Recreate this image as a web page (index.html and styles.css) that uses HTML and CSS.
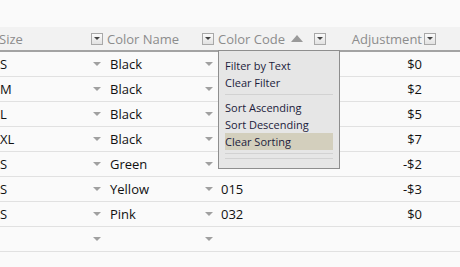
FILE: index.html
```html
<!DOCTYPE html>
<html lang="en">
<head>
<meta charset="UTF-8">
<title>Product Options Grid</title>
<link rel="stylesheet" href="styles.css">
</head>
<body>
<div class="grid">
    <div class="head-row">
        <div class="hcell"><span class="htext size-text">Size</span><span class="hbtn"></span></div>
        <div class="hcell"><span class="htext">Color Name</span><span class="hbtn"></span></div>
        <div class="hcell"><span class="htext">Color Code<span class="sort-up"></span></span><span class="hbtn"></span></div>
        <div class="hcell right"><span class="htext">Adjustment</span><span class="hbtn"></span></div>
    </div>

    <div class="row">
        <div class="cell pick first">S<span class="arrow"></span></div>
        <div class="cell pick">Black<span class="arrow"></span></div>
        <div class="cell"></div>
        <div class="cell money">$0</div>
    </div>
    <div class="row">
        <div class="cell pick first">M<span class="arrow"></span></div>
        <div class="cell pick">Black<span class="arrow"></span></div>
        <div class="cell"></div>
        <div class="cell money">$2</div>
    </div>
    <div class="row">
        <div class="cell pick first">L<span class="arrow"></span></div>
        <div class="cell pick">Black<span class="arrow"></span></div>
        <div class="cell"></div>
        <div class="cell money">$5</div>
    </div>
    <div class="row">
        <div class="cell pick first">XL<span class="arrow"></span></div>
        <div class="cell pick">Black<span class="arrow"></span></div>
        <div class="cell"></div>
        <div class="cell money">$7</div>
    </div>
    <div class="row">
        <div class="cell pick first">S<span class="arrow"></span></div>
        <div class="cell pick">Green<span class="arrow"></span></div>
        <div class="cell"></div>
        <div class="cell money">-$2</div>
    </div>
    <div class="row">
        <div class="cell pick first">S<span class="arrow"></span></div>
        <div class="cell pick">Yellow<span class="arrow"></span></div>
        <div class="cell">015</div>
        <div class="cell money">-$3</div>
    </div>
    <div class="row">
        <div class="cell pick first">S<span class="arrow"></span></div>
        <div class="cell pick">Pink<span class="arrow"></span></div>
        <div class="cell">032</div>
        <div class="cell money">$0</div>
    </div>
    <div class="row">
        <div class="cell pick first"><span></span><span class="arrow"></span></div>
        <div class="cell pick"><span></span><span class="arrow"></span></div>
        <div class="cell"></div>
        <div class="cell money"></div>
    </div>

    <!-- column menu for Color Code -->
    <div class="col-menu">
        <div class="menu-item">Filter by Text</div>
        <div class="menu-item">Clear Filter</div>
        <div class="menu-sep"></div>
        <div class="menu-item">Sort Ascending</div>
        <div class="menu-item">Sort Descending</div>
        <div class="menu-item active">Clear Sorting</div>
        <div class="menu-sep"></div>
        <div class="menu-sep last"></div>
    </div>
</div>
</body>
</html>
```

FILE: styles.css
```css
body, html {
    margin: 0;
    height: 100%;
    background: #fafafa;
    font-family: "Open Sans", sans-serif;
    overflow: hidden;
}
.grid {
    position: relative;
    padding-top: 27px;
}
.head-row, .row {
    display: grid;
    grid-template-columns: 105px 111px 112px 132px;
}
.head-row {
    height: 23px;
    background: #f2f2f2;
    border-bottom: 2px solid #a3a3a3;
}
.hcell {
    display: flex;
    align-items: center;
    justify-content: space-between;
    padding: 0 2px;
    color: #8c8c8c;
    font-size: 13px;
}
.hcell.right {
    justify-content: flex-end;
    padding-right: 24px;
    gap: 2px;
}
.htext {
    display: flex;
    align-items: center;
}
.size-text {
    margin-left: -3px;
}
.hbtn {
    width: 10px;
    height: 10px;
    border: 1px solid #a8a8a8;
    background: linear-gradient(#fbfbfb, #e2e2e2);
    display: flex;
    align-items: center;
    justify-content: center;
}
.hbtn::after {
    content: "";
    border-left: 3px solid transparent;
    border-right: 3px solid transparent;
    border-top: 3px solid #444;
}
.sort-up {
    margin-left: 6px;
    border-left: 6px solid transparent;
    border-right: 6px solid transparent;
    border-bottom: 7px solid #9a9a9a;
}
.row {
    height: 24px;
    border-bottom: 1px solid #e1e1e1;
    font-size: 13px;
    color: #111;
}
.cell {
    display: flex;
    align-items: center;
    padding-left: 5px;
}
.cell.pick {
    justify-content: space-between;
    padding-right: 3px;
}
.cell.first {
    padding-left: 0;
    padding-right: 4px;
}
.cell.money {
    justify-content: flex-end;
    padding-right: 38px;
}
.arrow {
    border-left: 4px solid transparent;
    border-right: 4px solid transparent;
    border-top: 4px solid #a0a0a0;
}
.col-menu {
    position: absolute;
    left: 218px;
    top: 50px;
    width: 108px;
    padding: 6px 6px 9px 6px;
    background: #e6e6e6;
    border: 1px solid #8e8e8e;
    font-size: 11px;
    color: #1c1c3c;
}
.menu-item {
    height: 17px;
    line-height: 17px;
}
.menu-item.active {
    background: #d3cfbd;
}
.menu-sep {
    height: 1px;
    background: #d2d2d2;
    margin: 3px 0 4px;
}
.menu-sep.last {
    margin: 0;
}
```
